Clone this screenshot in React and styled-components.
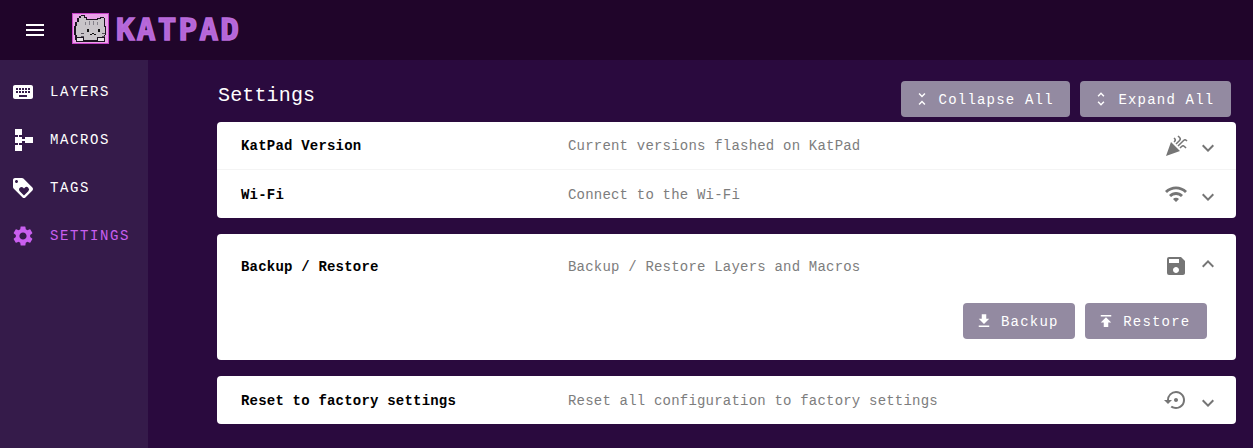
import styled, { createGlobalStyle } from "styled-components"
import {
  MdMenu, MdKeyboard, MdLoyalty, MdSettings, MdUnfoldLess, MdUnfoldMore, MdCelebration,
  MdWifi, MdSave, MdSettingsBackupRestore, MdFileDownload, MdPublish, MdExpandMore, MdExpandLess,
} from "react-icons/md"

const GlobalStyle = createGlobalStyle`
html, body {
    margin: 0;
    padding: 0;
    background: #2a0a3e;
    font-family: "Liberation Mono", "Courier New", monospace;
}
`

const Page = styled.div`
width: 1253px;
height: 448px;
overflow: hidden;
display: flex;
flex-direction: column;
`

const Header = styled.header`
height: 60px;
flex: none;
background: #20052a;
display: flex;
align-items: center;
padding-left: 23px;
color: #fff;
`

const MenuButton = styled.div`
width: 24px;
height: 24px;
display: flex;
margin-right: 25px;
font-size: 24px;
`

const Logo = styled.div`
display: flex;
align-items: center;
gap: 7px;
margin-top: -3px;
`

const LogoText = styled.span`
font-family: "DejaVu Sans Mono", monospace;
font-weight: 700;
font-size: 31px;
line-height: 30px;
letter-spacing: 2.2px;
color: #b565d8;
-webkit-text-stroke: 1.4px #b96cdb;
`

const Body = styled.div`
flex: 1;
display: flex;
min-height: 0;
`

const Sidebar = styled.nav`
width: 148px;
flex: none;
background: #351b4a;
display: flex;
flex-direction: column;
padding-top: 8px;
`

const NavItem = styled.div`
height: 48px;
display: flex;
align-items: center;
padding-left: 11px;
gap: 15px;
font-size: 14px;
letter-spacing: 1.6px;
color: ${(p) => (p.$active ? "#c95ff0" : "#fff")};

svg {
    flex: none;
    width: 24px;
    height: 24px;
}
`

const Main = styled.main`
flex: 1;
padding: 21px 17px 0 69px;
display: flex;
flex-direction: column;
`

const TitleRow = styled.div`
display: flex;
align-items: flex-start;
justify-content: space-between;
padding-right: 5px;
margin-bottom: 5px;
`

const Title = styled.h1`
margin: 1px 0 0 1px;
font-size: 20px;
font-weight: 400;
line-height: 28px;
letter-spacing: 0.15px;
color: #fff;
`

const ButtonGroup = styled.div`
display: flex;
gap: 10px;
justify-content: flex-end;
`

const ActionButton = styled.div`
height: 36px;
display: flex;
align-items: center;
box-sizing: border-box;
padding: 0 16.6px 0 12px;
gap: 8px;
border-radius: 4px;
background: #938aa1;
color: #fff;
font-size: 14px;
letter-spacing: 1.2px;

span {
    padding-top: 1px;
}

svg {
    flex: none;
    width: 18px;
    height: 18px;
}
`

const Card = styled.section`
background: #fff;
border-radius: 4px;
margin-bottom: 16px;
`

const Row = styled.div`
height: ${(p) => (p.$tall ? "64px" : "48px")};
box-sizing: border-box;
display: flex;
align-items: center;
padding: 0 16px 0 24px;
color: #000;
font-size: 14px;
letter-spacing: 0.2px;
${(p) => p.$divider && "border-bottom: 1px solid #f4f4f4;"}
`

const RowTitle = styled.div`
width: 327px;
flex: none;
padding-top: 1px;
font-weight: 700;
`

const RowHint = styled.div`
flex: 1;
padding-top: 1px;
color: #7d7d7d;
`

const RowIcon = styled.div`
width: 24px;
height: 24px;
margin-right: 8px;
color: #757575;
font-size: 24px;
display: flex;
`

const Chevron = styled.div`
width: 24px;
height: 24px;
color: #757575;
font-size: 24px;
display: flex;
margin-top: ${(p) => (p.$up ? "-5px" : "5px")};
`

const RowActions = styled(ButtonGroup)`
padding: 5px 29px 21px 0;
`

// macro icon, no package has this shape
const MacroIcon = () => (
  <svg viewBox="0 0 24 24" fill="currentColor" shapeRendering="crispEdges">
    <path d="M4 1h7v6H4zM4 9h7v6H4zM4 17h7v6H4zM14 9h8v6h-8z" />
    <path d="M7 7h1v2H7zM7 15h1v2H7zM11 11h3v2h-3z" />
  </svg>
)

// the KatPad cat, on its pink square
const CatLogo = () => (
  <svg width="37" height="31" viewBox="0 0 37 31" shapeRendering="crispEdges">
    <rect width="37" height="31" fill="#c944c9" />
    <rect x="1" y="1" width="35" height="29" fill="#eaa4ea" />
    <path
      d="M9 2h4v2h2v2h10v-1h3v-1h4v1h1v8h1v9h-1v5h-1v2H5v-2H3v-5H2V13h1V9h2V5h2V3h2z"
      fill="#1c1420"
    />
    <path
      d="M9 3h3v2h2v2h12v-1h3v-1h3v9h1v8h-1v5H5v-5H4v-9h1V9h2V5h2z"
      fill="#c9c5c9"
    />
    <path d="M17 8h1v4h-1zM21 8h1v4h-1zM13 9h1v3h-1zM25 9h1v3h-1z" fill="#85818a" />
    <path d="M15 16h2v3h-2zM26 16h2v3h-2z" fill="#111" />
    <path d="M20 20h2v1h-2zM18 21h2v1h-2zM22 21h2v1h-2z" fill="#111" />
    <path d="M9 20h3v1H9zM9 23h3v1H9zM30 20h3v1h-3zM30 23h3v1h-3z" fill="#55505a" />
    <path d="M4 24h8v5H4zM25 24h8v5h-8z" fill="#1c1420" />
    <path d="M5 25h6v3H5zM26 25h6v3h-6z" fill="#e4e0e4" />
  </svg>
)

function App() {
  return (
    <Page>
      <GlobalStyle />
      <Header>
        <MenuButton><MdMenu /></MenuButton>
        <Logo>
          <CatLogo />
          <LogoText>KATPAD</LogoText>
        </Logo>
      </Header>
      <Body>
        <Sidebar>
          <NavItem><MdKeyboard /><span>LAYERS</span></NavItem>
          <NavItem><MacroIcon /><span>MACROS</span></NavItem>
          <NavItem><MdLoyalty /><span>TAGS</span></NavItem>
          <NavItem $active><MdSettings /><span>SETTINGS</span></NavItem>
        </Sidebar>
        <Main>
          <TitleRow>
            <Title>Settings</Title>
            <ButtonGroup>
              <ActionButton><MdUnfoldLess /><span>Collapse All</span></ActionButton>
              <ActionButton><MdUnfoldMore /><span>Expand All</span></ActionButton>
            </ButtonGroup>
          </TitleRow>

          <Card>
            <Row $divider>
              <RowTitle>KatPad Version</RowTitle>
              <RowHint>Current versions flashed on KatPad</RowHint>
              <RowIcon><MdCelebration /></RowIcon>
              <Chevron><MdExpandMore /></Chevron>
            </Row>
            <Row>
              <RowTitle>Wi-Fi</RowTitle>
              <RowHint>Connect to the Wi-Fi</RowHint>
              <RowIcon><MdWifi /></RowIcon>
              <Chevron><MdExpandMore /></Chevron>
            </Row>
          </Card>

          <Card>
            <Row $tall>
              <RowTitle>Backup / Restore</RowTitle>
              <RowHint>Backup / Restore Layers and Macros</RowHint>
              <RowIcon><MdSave /></RowIcon>
              <Chevron $up><MdExpandLess /></Chevron>
            </Row>
            <RowActions>
              <ActionButton><MdFileDownload /><span>Backup</span></ActionButton>
              <ActionButton><MdPublish /><span>Restore</span></ActionButton>
            </RowActions>
          </Card>

          <Card>
            <Row>
              <RowTitle>Reset to factory settings</RowTitle>
              <RowHint>Reset all configuration to factory settings</RowHint>
              <RowIcon><MdSettingsBackupRestore /></RowIcon>
              <Chevron><MdExpandMore /></Chevron>
            </Row>
          </Card>
        </Main>
      </Body>
    </Page>
  )
}

export default App
